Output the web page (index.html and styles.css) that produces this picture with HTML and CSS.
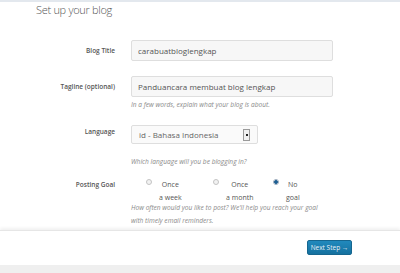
FILE: index.html
```html
<!DOCTYPE html>
<html lang="en">
<head>
  <meta charset="UTF-8">
  <title>Set up your blog</title>
  <link rel="stylesheet" href="styles.css">
</head>
<body>
  <div class="setup">
    <h1 class="setup-title">Set up your blog</h1>

    <div class="field field-first">
      <label class="field-label" for="title">Blog Title</label>
      <div class="field-body">
        <input class="text-input" type="text" id="title" value="carabuatbloglengkap">
      </div>
    </div>

    <div class="field">
      <label class="field-label" for="tagline">Tagline (optional)</label>
      <div class="field-body">
        <input class="text-input" type="text" id="tagline" value="Panduancara membuat blog lengkap">
        <p class="help">In a few words, explain what your blog is about.</p>
      </div>
    </div>

    <div class="field field-lang">
      <label class="field-label">Language</label>
      <div class="field-body">
        <div class="select">
          <span class="select-text">id - Bahasa Indonesia</span>
          <span class="select-arrow"><span class="select-dot"></span></span>
        </div>
        <p class="help help-lang">Which language will you be blogging in?</p>
      </div>
    </div>

    <div class="field field-goal">
      <label class="field-label">Posting Goal</label>
      <div class="field-body">
        <div class="goals">
          <div class="goal">
            <span class="radio"></span>
            <span class="goal-text">Once<br>a week</span>
          </div>
          <div class="goal">
            <span class="radio"></span>
            <span class="goal-text">Once<br>a month</span>
          </div>
          <div class="goal">
            <span class="radio radio-on"></span>
            <span class="goal-text">No<br>goal</span>
          </div>
        </div>
        <p class="help help-goal">How often would you like to post? We'll help you reach your goal with timely email reminders.</p>
      </div>
    </div>
  </div>

  <div class="actions">
    <button class="next-btn" type="button">Next Step &#8594;</button>
  </div>
  <div class="page-bottom"></div>
</body>
</html>
```

FILE: styles.css
```css
body {
  margin: 0;
  background: #fff;
  font-family: "Open Sans", "Liberation Sans", Arial, sans-serif;
  color: #444;
  overflow: hidden;
}
.setup {
  border-top: 2px solid #e3e8ee;
  height: 228px;
}
.setup-title {
  margin: 0;
  padding: 0 0 0 36px;
  font-size: 11px;
  font-weight: 300;
  letter-spacing: -0.3px;
  line-height: 15px;
  color: #555;
}
.field {
  display: grid;
  grid-template-columns: 115px 202px;
  column-gap: 16px;
  margin-top: 15px;
}
.field-first {
  margin-top: 23px;
}
.field-label {
  justify-self: end;
  font-size: 6.5px;
  font-weight: 600;
  color: #555;
  line-height: 21px;
}
.field-body {
  min-width: 0;
}
.text-input {
  display: block;
  box-sizing: border-box;
  width: 202px;
  height: 21px;
  margin: 0;
  padding: 0 6px;
  border: 1px solid #dedede;
  border-radius: 2px;
  background: #f7f7f7;
  font-family: "Open Sans", "Liberation Sans", Arial, sans-serif;
  font-size: 8px;
  color: #555;
}
.help {
  margin: 0;
  padding-top: 1px;
  font-size: 6.6px;
  font-style: italic;
  line-height: 13px;
  color: #8a8a8a;
}
.field-lang {
  margin-top: 14px;
}
.field-lang .field-label {
  line-height: 14px;
}
.select {
  box-sizing: border-box;
  width: 127px;
  height: 19px;
  border: 1px solid #dedede;
  border-radius: 2px;
  background: #fafafa;
  display: flex;
  align-items: center;
  justify-content: space-between;
  padding: 0 7px 0 7px;
}
.select-text {
  font-size: 8px;
  color: #666;
}
.select-arrow {
  box-sizing: border-box;
  width: 7px;
  height: 12px;
  border: 1px solid #9a9a9a;
  background: #f0f0f0;
  display: flex;
  align-items: center;
  justify-content: center;
}
.select-dot {
  width: 2px;
  height: 2px;
  background: #222;
}
.help-lang {
  padding-top: 11px;
}
.field-goal {
  margin-top: 10px;
}
.field-goal .field-label {
  line-height: 13px;
}
.goals {
  display: grid;
  grid-template-columns: 67px 60px auto;
  padding-left: 15px;
}
.goal {
  display: flex;
  align-items: flex-start;
}
.radio {
  box-sizing: border-box;
  width: 6px;
  height: 6px;
  margin-top: 1px;
  margin-right: 4px;
  border: 1px solid #c4c4c4;
  border-radius: 50%;
  background: #f2f2f2;
}
.radio-on {
  border-color: #9aaabb;
  background: radial-gradient(circle, #1d5f93 0 1.6px, #e8eef3 2px);
}
.goal-text {
  padding: 0 3px;
  text-align: center;
  font-size: 7px;
  line-height: 13px;
  color: #555;
}
.help-goal {
  margin-top: -3px;
  padding-top: 0;
  width: 195px;
}
.actions {
  height: 34px;
  border-top: 1px solid #e6e6e6;
  box-shadow: 0 -2px 3px rgba(0, 0, 0, 0.06);
  display: flex;
  justify-content: flex-end;
  align-items: flex-start;
  padding-right: 48px;
}
.next-btn {
  margin-top: 9px;
  width: 45px;
  height: 15px;
  padding: 0;
  border: 1px solid #16668f;
  border-radius: 2px;
  background: linear-gradient(#2189bd, #15719f);
  color: #e8f2f8;
  font-family: "Open Sans", "Liberation Sans", Arial, sans-serif;
  font-size: 6.5px;
  cursor: pointer;
}
.page-bottom {
  height: 10px;
  background: #efefef;
}
```
